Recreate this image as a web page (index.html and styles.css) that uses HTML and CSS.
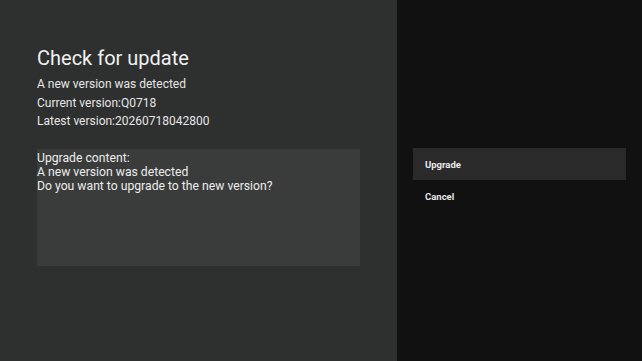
FILE: index.html
```html
<!DOCTYPE html>
<html lang="en">
<head>
    <meta charset="UTF-8">
    <meta name="viewport" content="width=device-width, initial-scale=1.0">
    <title>Check for update</title>
    <link rel="stylesheet" href="styles.css">
</head>
<body>
    <div class="screen">
        <div class="info">
            <h1>Check for update</h1>
            <div class="line">A new version was detected</div>
            <div class="line">Current version:Q0718</div>
            <div class="line">Latest version:20260718042800</div>
            <div class="content">
                Upgrade content:<br>
                A new version was detected<br>
                Do you want to upgrade to the new version?
            </div>
        </div>
        <div class="actions">
            <button class="action selected">Upgrade</button>
            <button class="action">Cancel</button>
        </div>
    </div>
</body>
</html>
```

FILE: styles.css
```css
body {
    margin: 0;
    font-family: Roboto, "Noto Sans", sans-serif;
    background-color: #111111;
    overflow: hidden;
}
.screen {
    display: flex;
    width: 642px;
    height: 361px;
}
.info {
    width: 360px;
    padding: 46px 0 0 37px;
    background-color: #2e302f;
    color: #f0f0f0;
}
h1 {
    margin: 0 0 5px 0;
    font-size: 20px;
    font-weight: 400;
    line-height: 24px;
}
.line {
    font-size: 12px;
    line-height: 18.5px;
    color: #e6e6e6;
}
.content {
    width: 323px;
    height: 117px;
    margin-top: 18px;
    padding-top: 2px;
    box-sizing: border-box;
    background-color: #3a3c3b;
    font-size: 12.2px;
    line-height: 14px;
    color: #ececec;
}
.actions {
    flex: 1;
    display: flex;
    flex-direction: column;
    padding: 148px 16px 0 16px;
}
.action {
    height: 32px;
    padding: 0 0 0 12px;
    border: none;
    background: none;
    text-align: left;
    font-family: Roboto, "Noto Sans", sans-serif;
    font-size: 9.5px;
    font-weight: 700;
    color: #e8e8e8;
}
.action.selected {
    background-color: #2a2a2a;
}
```
